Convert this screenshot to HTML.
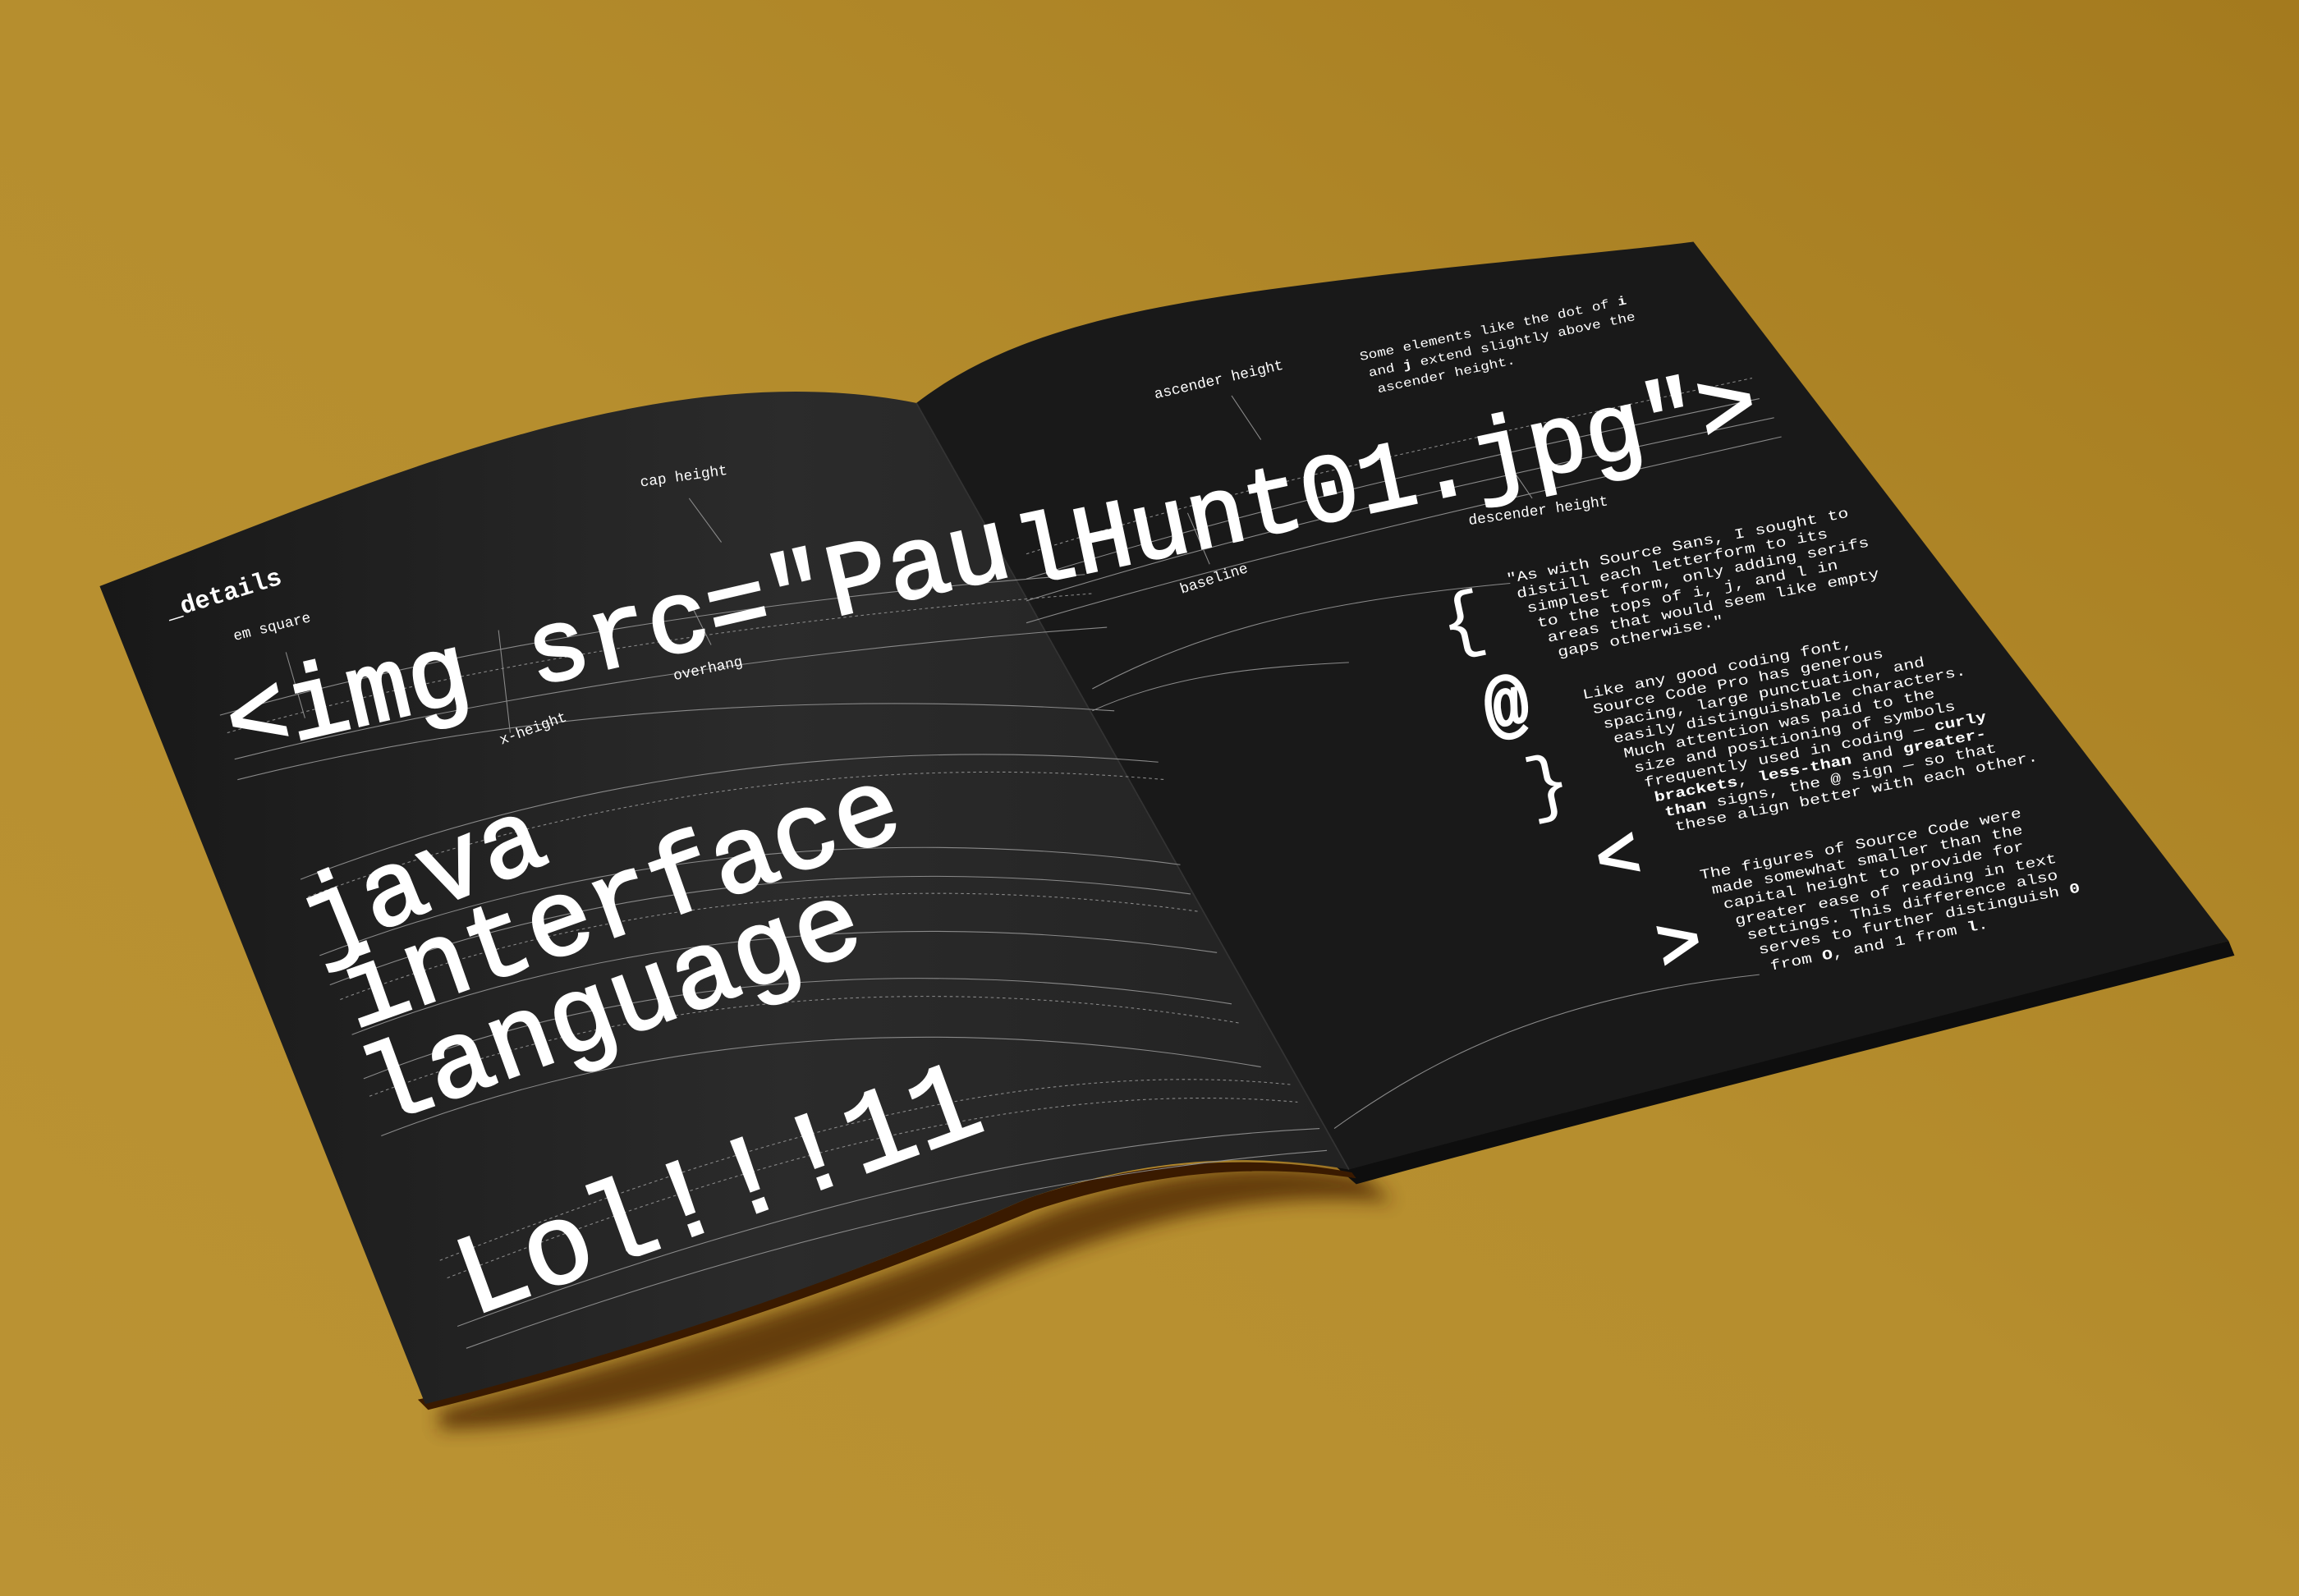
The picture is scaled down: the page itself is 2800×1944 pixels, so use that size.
<!DOCTYPE html>
<html><head><meta charset="utf-8">
<style>
html,body{margin:0;padding:0;width:2800px;height:1944px;overflow:hidden;background:#b08a2a;}
svg{display:block}
text{font-family:"Liberation Mono",monospace;fill:#fff}
.b{font-size:12px}
.big{stroke:#fff;stroke-width:1.6}
</style></head>
<body>
<svg width="2800" height="1944" viewBox="0 0 1568 1089" preserveAspectRatio="none" xmlns="http://www.w3.org/2000/svg">
<defs>
<linearGradient id="bg" x1="0" y1="1" x2="1" y2="0">
<stop offset="0" stop-color="#bb9334"/><stop offset="0.5" stop-color="#b68e2e"/><stop offset="1" stop-color="#a47a1e"/>
</linearGradient>
<linearGradient id="lp" x1="0" y1="0" x2="1" y2="0">
<stop offset="0" stop-color="#181818"/><stop offset="0.55" stop-color="#2b2b2b"/><stop offset="1" stop-color="#222"/>
</linearGradient>
<filter id="bl"><feGaussianBlur stdDeviation="6"/></filter>
</defs>
<rect width="1568" height="1089" fill="url(#bg)"/>
<path d="M300,962 C450,925 600,875 720,825 C800,798 860,790 930,803 L950,820 C860,812 770,830 640,890 C520,940 400,975 300,975 Z" fill="#4a2400" filter="url(#bl)" opacity="0.75"/>
<path d="M910,795 L1520,642 L1524,652 C1300,710 1100,760 925,808 Z" fill="#0e0e0e"/>
<path d="M285,955 C420,925 560,880 700,818 C780,790 860,788 922,800 L925,804 C860,794 790,798 705,826 C560,886 420,930 292,962 Z" fill="#3a1a00"/>
<path d="M68,400 C250,330 450,240 625,275 L920,798 C850,786 780,790 700,818 C560,880 420,925 290,958 Z" fill="url(#lp)"/>
<path d="M625,275 C690,225 780,208 900,193 C1000,180 1100,172 1155,165 L1520,642 C1300,700 1100,750 920,798 Z" fill="#191919"/>
<path d="M625,275 L920,798" stroke="#333" stroke-width="1"/>

<g fill="none" stroke="#8a8a8a" stroke-width="0.6">
<path d="M150,488 C300,445 500,410 740,392"/>
<path d="M155,500 C300,458 500,424 745,405" stroke-dasharray="2 2"/>
<path d="M160,518 C320,478 520,445 755,428"/>
<path d="M162,532 C330,490 530,470 760,485"/>
<path d="M205,600 C360,540 560,500 790,520"/>
<path d="M210,612 C370,552 570,512 795,532" stroke-dasharray="2 2"/>
<path d="M218,652 C380,590 580,560 805,590"/>
<path d="M225,672 C390,608 590,580 812,610"/>
<path d="M232,682 C400,618 600,592 818,622" stroke-dasharray="2 2"/>
<path d="M240,706 C410,640 610,618 830,650"/>
<path d="M248,736 C420,668 620,650 840,685"/>
<path d="M252,748 C430,680 630,662 845,698" stroke-dasharray="2 2"/>
<path d="M260,775 C440,705 640,690 860,728"/>
<path d="M300,860 C480,790 680,720 880,740" stroke-dasharray="2 2"/>
<path d="M305,872 C490,800 690,735 885,752" stroke-dasharray="2 2"/>
<path d="M312,905 C500,835 700,780 900,770"/>
<path d="M318,920 C510,850 710,800 905,785"/>
<path d="M195,445 L208,490 M340,430 L348,500 M470,340 L492,370 M485,440 L470,410"/>
</g>
<g fill="none" stroke="#8a8a8a" stroke-width="0.6">
<path d="M700,378 C850,330 1000,300 1195,258" stroke-dasharray="2 2"/>
<path d="M700,395 C860,345 1010,312 1200,272"/>
<path d="M700,410 C860,360 1020,325 1210,285"/>
<path d="M700,425 C870,375 1030,340 1215,298"/>
<path d="M745,470 C820,430 900,410 1030,398"/>
<path d="M745,485 C800,460 860,455 920,452"/>
<path d="M910,770 C980,720 1060,680 1200,665"/>
<path d="M840,270 L860,300 M1045,340 L1030,318 M825,385 L810,350"/>
</g>

<text transform="translate(115,422) rotate(-17)" font-size="17" font-weight="bold">_details</text>
<text transform="translate(160,437) rotate(-14)" font-size="10">em square</text>
<text transform="translate(437,332) rotate(-8)" font-size="10">cap height</text>
<text transform="translate(460,464) rotate(-12)" font-size="10">overhang</text>
<text transform="translate(342,508) rotate(-20)" font-size="10">x-height</text>
<text class="big" transform="translate(160,515) rotate(-13)" font-size="70">&lt;img src="Pau</text>
<text class="big" transform="translate(216,652) rotate(-22)" font-size="72">java</text>
<text class="big" transform="translate(242,702) rotate(-19.5)" font-size="74">interface</text>
<text class="big" transform="translate(258,768) rotate(-20)" font-size="74">language</text>
<text class="big" transform="translate(322,898) rotate(-20)" font-size="78">Lol!!!11</text>

<text class="big" transform="translate(698,400) rotate(-12)" font-size="66">lHunt01.jpg"&gt;</text>
<text transform="translate(788,272) rotate(-13)" font-size="10">ascender height</text>
<g font-size="10">
<text transform="translate(928,246) rotate(-12) scale(1,0.85)">Some elements like the dot of <tspan font-weight="bold">i</tspan></text>
<text transform="translate(934,257) rotate(-12) scale(1,0.85)">and <tspan font-weight="bold">j</tspan> extend slightly above the</text>
<text transform="translate(940,268) rotate(-12) scale(1,0.85)">ascender height.</text>
</g>
<text transform="translate(1002,358) rotate(-8)" font-size="10">descender height</text>
<text transform="translate(806,405) rotate(-18)" font-size="10">baseline</text>

<g class="b">
<text transform="translate(1028,398) rotate(-11) scale(1,0.8)">"As with Source Sans, I sought to</text>
<text transform="translate(1035,408) rotate(-11) scale(1,0.8)">distill each letterform to its</text>
<text transform="translate(1042,418) rotate(-11) scale(1,0.8)">simplest form, only adding serifs</text>
<text transform="translate(1049,428) rotate(-11) scale(1,0.8)">to the tops of i, j, and l in</text>
<text transform="translate(1056,438) rotate(-11) scale(1,0.8)">areas that would seem like empty</text>
<text transform="translate(1063,448) rotate(-11) scale(1,0.8)">gaps otherwise."</text>

<text transform="translate(1080,477) rotate(-11) scale(1,0.8)">Like any good coding font,</text>
<text transform="translate(1087,487) rotate(-11) scale(1,0.8)">Source Code Pro has generous</text>
<text transform="translate(1094,497) rotate(-11) scale(1,0.8)">spacing, large punctuation, and</text>
<text transform="translate(1101,507) rotate(-11) scale(1,0.8)">easily distinguishable characters.</text>
<text transform="translate(1108,517) rotate(-11) scale(1,0.8)">Much attention was paid to the</text>
<text transform="translate(1115,527) rotate(-11) scale(1,0.8)">size and positioning of symbols</text>
<text transform="translate(1122,537) rotate(-11) scale(1,0.8)">frequently used in coding — <tspan font-weight="bold">curly</tspan></text>
<text transform="translate(1129,547) rotate(-11) scale(1,0.8)"><tspan font-weight="bold">brackets</tspan>, <tspan font-weight="bold">less-than</tspan> and <tspan font-weight="bold">greater-</tspan></text>
<text transform="translate(1136,557) rotate(-11) scale(1,0.8)"><tspan font-weight="bold">than</tspan> signs, the @ sign — so that</text>
<text transform="translate(1143,567) rotate(-11) scale(1,0.8)">these align better with each other.</text>

<text transform="translate(1160,600) rotate(-11) scale(1,0.8)">The figures of Source Code were</text>
<text transform="translate(1168,610) rotate(-11) scale(1,0.8)">made somewhat smaller than the</text>
<text transform="translate(1176,620) rotate(-11) scale(1,0.8)">capital height to provide for</text>
<text transform="translate(1184,631) rotate(-11) scale(1,0.8)">greater ease of reading in text</text>
<text transform="translate(1192,641) rotate(-11) scale(1,0.8)">settings. This difference also</text>
<text transform="translate(1200,651) rotate(-11) scale(1,0.8)">serves to further distinguish <tspan font-weight="bold">0</tspan></text>
<text transform="translate(1208,662) rotate(-11) scale(1,0.8)">from <tspan font-weight="bold">O</tspan>, and 1 from <tspan font-weight="bold">l</tspan>.</text>
</g>

<text transform="translate(986,442) rotate(-12)" font-size="50">{</text>
<text class="big" transform="translate(1016,500) rotate(-12)" font-size="50">@</text>
<text transform="translate(1044,553) rotate(-12)" font-size="50">}</text>
<text class="big" transform="translate(1092,603) rotate(-12)" font-size="50">&lt;</text>
<text class="big" transform="translate(1134,662) rotate(-12)" font-size="50">&gt;</text>
</svg>
</body></html>
